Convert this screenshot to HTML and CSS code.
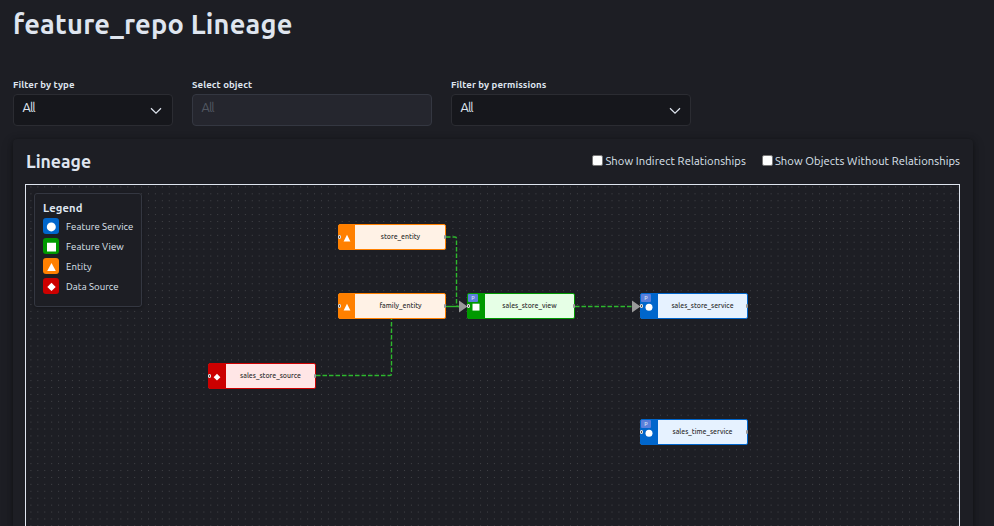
FILE: index.html
```html
<!DOCTYPE html>
<html lang="en">
<head>
<meta charset="utf-8">
<title>feature_repo Lineage</title>
<link rel="stylesheet" href="styles.css">
</head>
<body>
<main class="page">
  <h1 class="page-title">feature_repo Lineage</h1>
  <div class="filters">
    <div class="field field-type">
      <label class="label">Filter by type</label>
      <div class="select">All<svg class="chevron" viewBox="0 0 12 8"><path d="M1 1.300 6 6.200 11 1.300"/></svg></div>
    </div>
    <div class="field">
      <label class="label">Select object</label>
      <div class="select disabled">All</div>
    </div>
    <div class="field">
      <label class="label">Filter by permissions</label>
      <div class="select">All<svg class="chevron" viewBox="0 0 12 8"><path d="M1 1.300 6 6.200 11 1.300"/></svg></div>
    </div>
  </div>
  <section class="panel">
    <header class="panel-head">
      <h2 class="panel-title">Lineage</h2>
      <div class="checks">
        <label class="check"><span class="box"></span><span>Show Indirect Relationships</span></label>
        <label class="check"><span class="box"></span><span>Show Objects Without Relationships</span></label>
      </div>
    </header>
    <div class="canvas">
      <svg class="edges" viewBox="0 0 933 341">
        <defs>
          <pattern id="dots" x="4.400" y="1.400" width="6.918" height="6.918" patternUnits="userSpaceOnUse"><rect width="1" height="1" fill="#414247"/></pattern>
        </defs>
        <rect width="933" height="341" fill="url(#dots)"/>
        <g class="wires">
          <path d="M420 52H429Q430.500 52 430.500 53.500V119.500Q430.500 121.500 432.500 121.500H434"/>
          <path class="solid" d="M420 121.500H434"/>
          <path d="M290 190.500H364Q365.500 190.500 365.500 189V134"/>
          <path d="M549 121.500H607"/>
        </g>
        <path class="arrow" d="M433 115.500 441.500 121.500 433 127.500ZM606 115.500 614.500 121.500 606 127.500Z"/>
      </svg>
      <div class="node entity n-store"><i class="icon"><svg viewBox="0 0 8 8"><path d="M4 .8 7.400 7.500H.6Z"/></svg></i><span class="name">store_entity</span></div>
      <div class="node entity n-family"><i class="icon"><svg viewBox="0 0 8 8"><path d="M4 .8 7.400 7.500H.6Z"/></svg></i><span class="name">family_entity</span></div>
      <div class="node source n-source"><i class="icon"><svg viewBox="0 0 8 8"><path d="M4 .8 7.400 4.200 4 7.600.6 4.200Z"/></svg></i><span class="name">sales_store_source</span></div>
      <div class="node view n-view"><i class="icon"><svg viewBox="0 0 8 8"><path d="M.5.7H7.500V7.600H.5Z"/></svg></i><span class="name">sales_store_view</span><b class="badge">P</b></div>
      <div class="node service n-service"><i class="icon"><svg viewBox="0 0 8 8"><circle cx="4" cy="4.200" r="3.500"/></svg></i><span class="name">sales_store_service</span><b class="badge">P</b></div>
      <div class="node service n-time"><i class="icon"><svg viewBox="0 0 8 8"><circle cx="4" cy="4.200" r="3.500"/></svg></i><span class="name">sales_time_service</span><b class="badge">P</b></div>
      <aside class="legend">
        <h3 class="legend-title">Legend</h3>
        <div class="row"><svg class="chip c-service" viewBox="0 0 16 16"><circle cx="8.300" cy="8.900" r="4.500"/></svg><span>Feature Service</span></div>
        <div class="row"><svg class="chip c-view" viewBox="0 0 16 16"><path d="M4 4.700H13V13.500H4Z"/></svg><span>Feature View</span></div>
        <div class="row"><svg class="chip c-entity" viewBox="0 0 16 16"><path d="M8.500 5 12.800 13H4.200Z"/></svg><span>Entity</span></div>
        <div class="row"><svg class="chip c-source" viewBox="0 0 16 16"><path d="M8.500 4.700 12.700 8.900 8.500 13.100 4.300 8.900Z"/></svg><span>Data Source</span></div>
      </aside>
    </div>
  </section>
</main>
</body>
</html>
```
FILE: styles.css
```css
*, *::before, *::after { box-sizing: border-box; }
html { overflow: hidden; }
body {
  margin: 0;
  height: 526px;
  overflow: hidden;
  background: #1d1e24;
  color: #dfe5ef;
  font-family: Ubuntu, "Noto Sans", sans-serif;
}
h1, h2, h3 { margin: 0; font-weight: 700; }
.page { padding: 8px 21px 0 13px; }
.page-title { height: 32px; font-size: 27.2px; line-height: 32px; letter-spacing: .21px; white-space: nowrap; }
.filters { display: flex; gap: 19px; margin-top: 38px; }
.field { width: 240px; }
.field-type { width: 160px; }
.label { display: block; height: 16px; line-height: 14px; font-size: 9.6px; font-weight: 700; letter-spacing: .09px; white-space: nowrap; }
.select {
  display: flex;
  justify-content: space-between;
  height: 32px;
  padding: 0 9px 0 8.5px;
  border: 1px solid #2b2c32;
  border-radius: 4px;
  background: #16171c;
  font-size: 12.8px;
  line-height: 25px;
  letter-spacing: -0.9px;
}
.select.disabled { background: #25262e; border-color: #343741; color: #515761; }
.chevron { width: 12px; height: 8px; margin: 12px 0 0; fill: none; stroke: #dfe5ef; stroke-width: 1.2; }
.field-type .chevron { margin-right: 1px; }
.panel {
  height: 387px;
  margin-top: 13px;
  padding: 0 13px;
  border-radius: 4px 4px 0 0;
  background: #1d1e24;
  box-shadow: 0 1px 5px rgba(0, 0, 0, .35), 0 4px 12px rgba(0, 0, 0, .25);
}
.panel-head { display: flex; align-items: center; justify-content: space-between; height: 45px; padding-bottom: 1px; }
.panel-title { padding-top: 2px; font-size: 17.6px; line-height: 24px; }
.checks { display: flex; gap: 16px; font-size: 11.2px; line-height: 16px; letter-spacing: .08px; white-space: nowrap; }
.check { display: flex; align-items: center; gap: 2px; }
.box { width: 11px; height: 11px; margin-bottom: 1px; border: 1px solid #767676; border-radius: 2px; background: #fff; }
.canvas { position: relative; width: 935px; height: 342px; margin-left: -1px; border: 1px solid #dfe5ef; border-bottom: 0; }
.edges { position: absolute; left: 0; top: 0; width: 933px; height: 341px; }
.wires { fill: none; stroke: #2eb82e; stroke-width: 1.4; stroke-dasharray: 4.5 2; }
.wires .solid { stroke-dasharray: none; }
.arrow { fill: #999; }
.node {
  position: absolute;
  display: flex;
  width: 108px;
  height: 26px;
  border: 1px solid var(--main);
  border-radius: 2px;
  background: var(--soft);
  color: #333;
}
.node::before, .node::after {
  content: "";
  position: absolute;
  top: 10px;
  width: 2px;
  height: 4px;
  border-radius: 1px;
  background: #999;
}
.node::before { left: -1px; width: 3px; border: 1px solid #ddd; background: #555; }
.node::after { right: -1px; }
.icon { display: flex; justify-content: center; align-items: center; width: 16px; height: 24px; background: var(--main); }
.icon svg { width: 8px; height: 8px; margin: 2px 1px 0 0; fill: #fff; }
.name { flex: 1; font-size: 7px; font-weight: 500; line-height: 23px; text-align: center; white-space: nowrap; }
.entity .name { padding-left: 1px; }
.badge { position: absolute; left: 0; top: 0; width: 10px; height: 8px; border-radius: 1px; background: #5a7fdb; color: #dfe5ef; font-size: 5.5px; line-height: 8px; text-align: center; font-weight: 500; }
.entity { --main: #ff8000; --soft: #fff2e6; }
.source { --main: #c00; --soft: #ffe6e6; }
.view { --main: #090; --soft: #e6ffe6; }
.service { --main: #06c; --soft: #e6f2ff; }
.n-store { left: 312px; top: 39px; }
.n-family { left: 312px; top: 108px; }
.n-source { left: 182px; top: 178px; }
.n-view { left: 441px; top: 108px; }
.n-service { left: 614px; top: 108px; }
.n-time { left: 614px; top: 234px; }
.source .icon, .view .icon, .service .icon { width: 17px; }
.legend {
  position: absolute;
  left: 8px;
  top: 8px;
  width: 108px;
  height: 114px;
  padding: 8px;
  border: 1px solid #343741;
  border-radius: 3px;
  background: #1d1e24;
  box-shadow: 0 1px 3px rgba(0, 0, 0, .3);
}
.legend-title { height: 16px; font-size: 11.2px; line-height: 13px; letter-spacing: .1px; }
.row { display: flex; align-items: center; gap: 7px; height: 16px; margin-bottom: 4px; font-size: 9.6px; line-height: 17px; letter-spacing: .06px; white-space: nowrap; }
.chip { flex: none; width: 16px; height: 16px; border-radius: 3px; fill: #fff; }
.c-service { background: #06c; }
.c-view { background: #090; }
.c-entity { background: #ff8000; }
.c-source { background: #c00; }
```
